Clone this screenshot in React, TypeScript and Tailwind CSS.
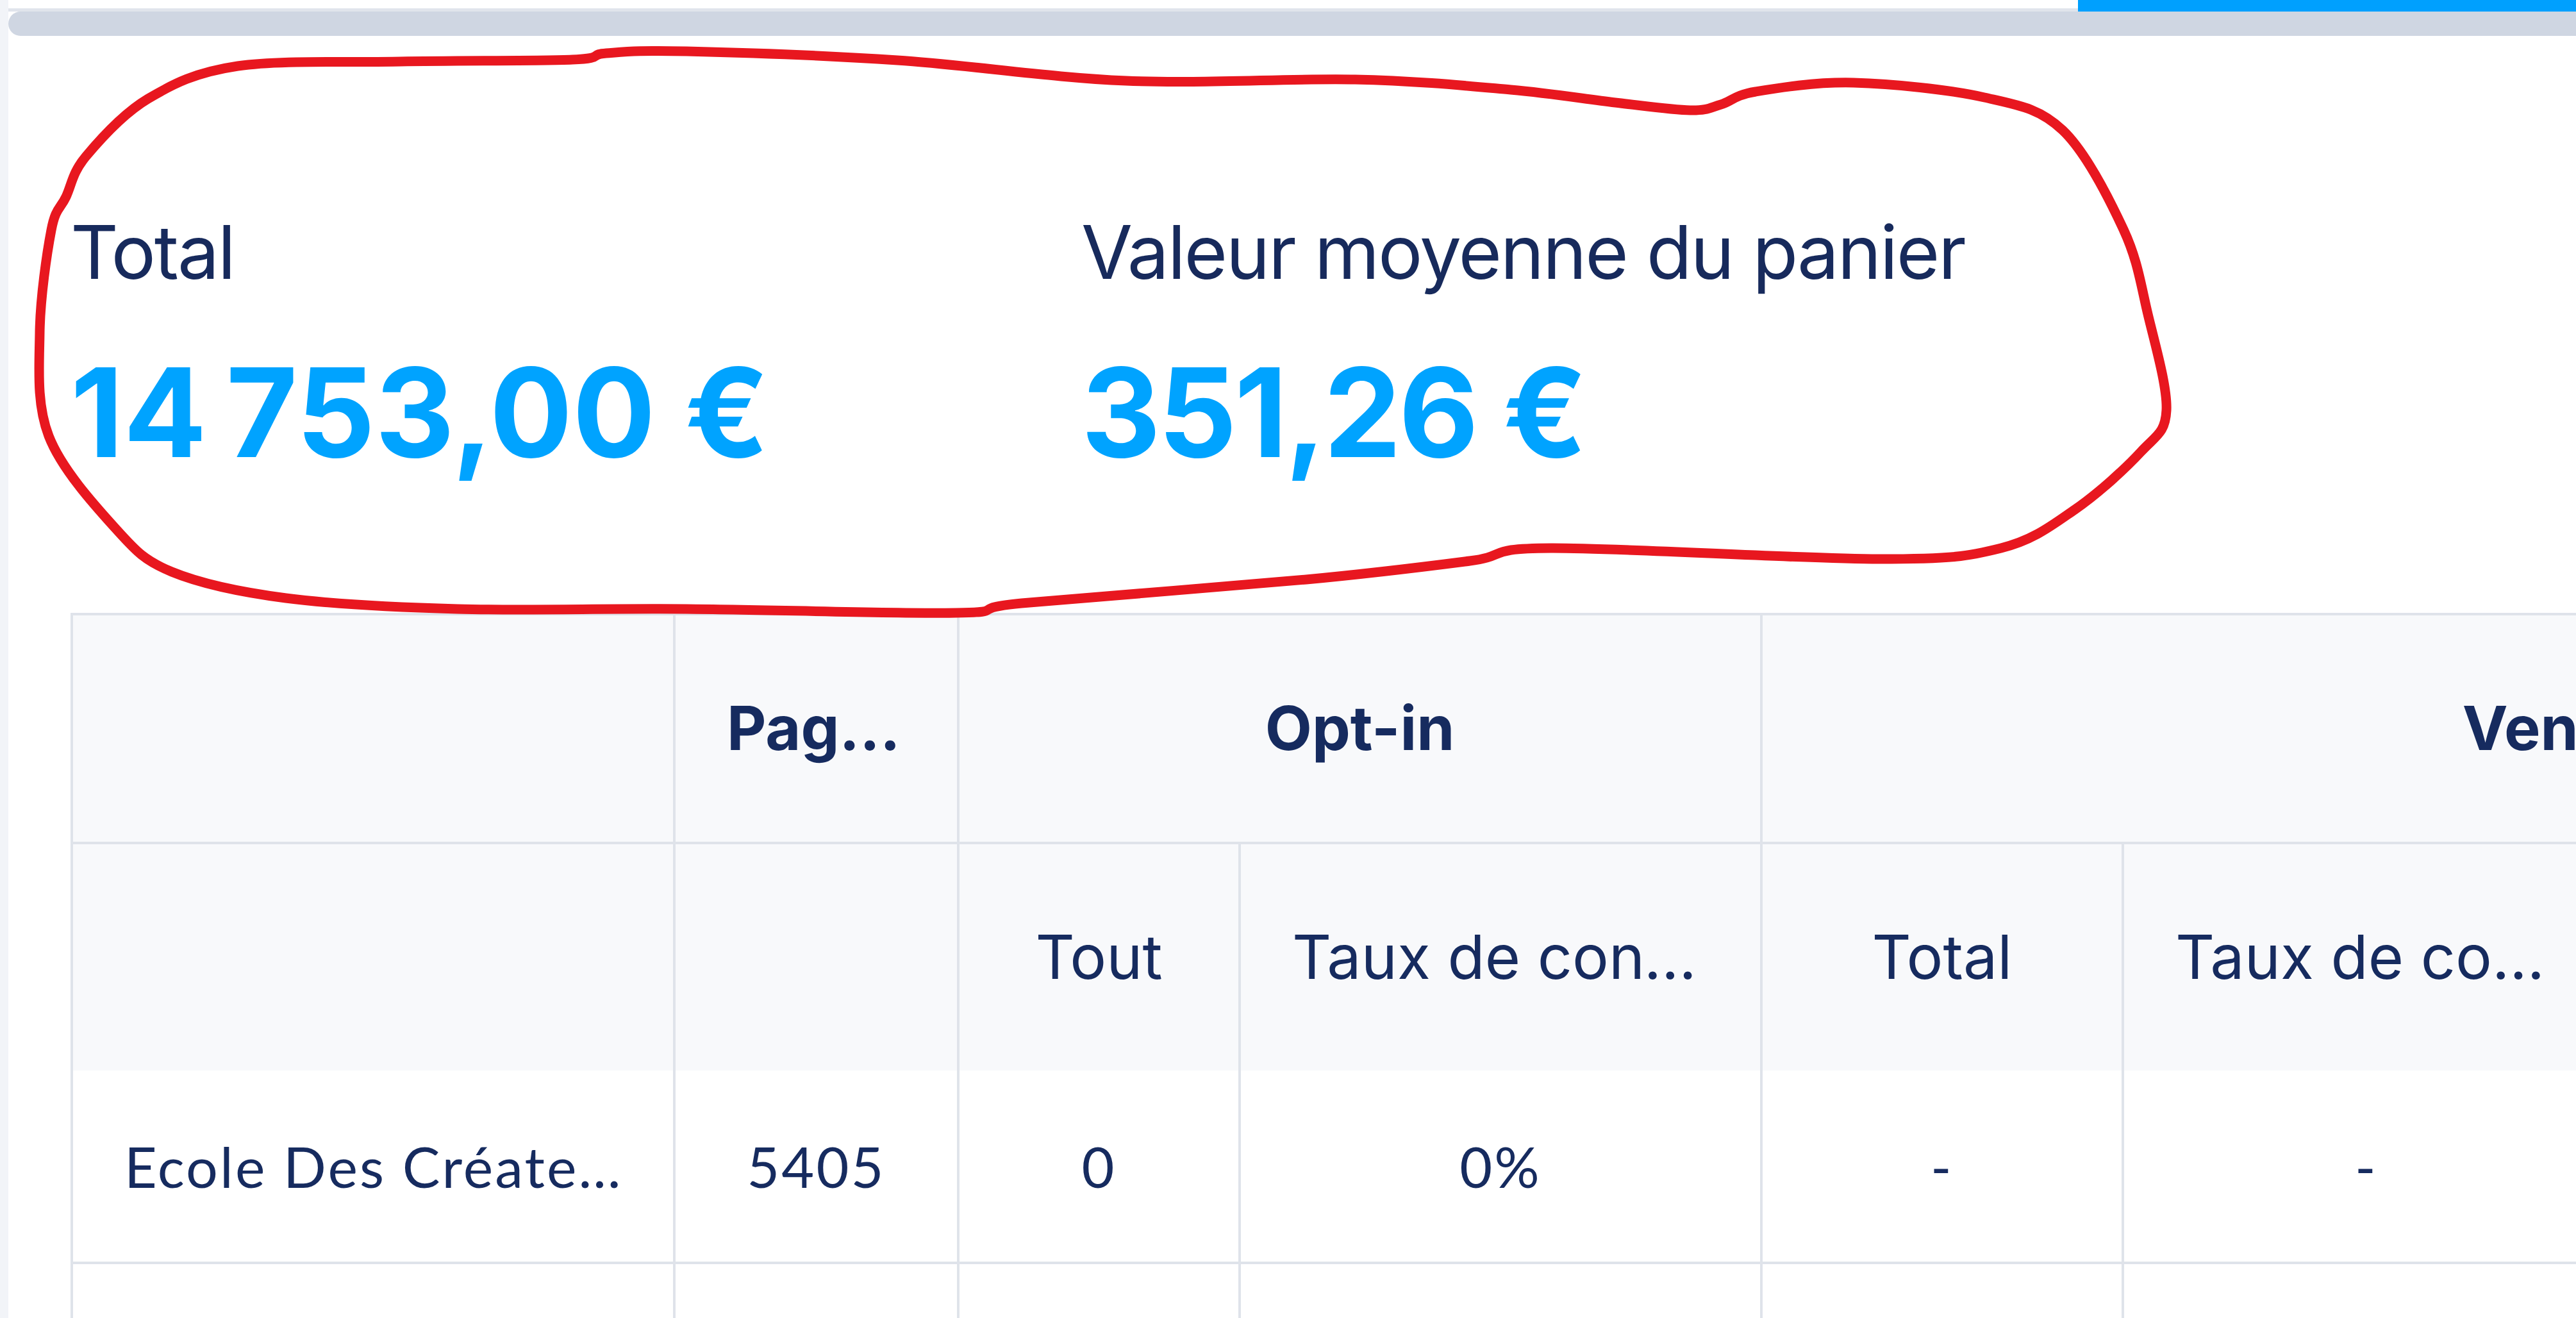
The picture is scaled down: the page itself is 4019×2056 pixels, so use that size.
import React from "react";

// hand-drawn red loop around the stats, points in page pixels
const loopPoints: [number, number][] = [
  [134, 244], [231, 154], [371, 103], [625, 96], [893, 93], [946, 83],
  [1071, 80], [1400, 94], [1757, 126], [2114, 124], [2357, 140], [2520, 160],
  [2637, 172], [2685, 163], [2739, 143], [2892, 129], [3096, 152], [3218, 203],
  [3313, 358], [3351, 490], [3380, 640], [3340, 705], [3237, 795], [3122, 855],
  [2931, 872], [2420, 855], [2293, 875], [2038, 904], [1594, 941], [1492, 956],
  [1071, 950], [714, 950], [446, 933], [268, 892], [179, 823], [76, 680],
  [62, 519], [80, 359], [103, 307],
];

function smoothClosedPath(pts: [number, number][]) {
  const n = pts.length;
  let d = `M ${pts[0][0]} ${pts[0][1]}`;
  for (let i = 0; i < n; i++) {
    const p0 = pts[(i - 1 + n) % n];
    const p1 = pts[i];
    const p2 = pts[(i + 1) % n];
    const p3 = pts[(i + 2) % n];
    const c1x = p1[0] + (p2[0] - p0[0]) / 6;
    const c1y = p1[1] + (p2[1] - p0[1]) / 6;
    const c2x = p2[0] - (p3[0] - p1[0]) / 6;
    const c2y = p2[1] - (p3[1] - p1[1]) / 6;
    d += ` C ${c1x.toFixed(1)} ${c1y.toFixed(1)} ${c2x.toFixed(1)} ${c2y.toFixed(1)} ${p2[0]} ${p2[1]}`;
  }
  return d;
}

function Stat({ label, value, className }: { label: string; value: string; className?: string }) {
  return (
    <div className={className}>
      <div className="text-[116px] leading-[140px] tracking-[-0.02em] text-[#172a5c]">{label}</div>
      <div className="mt-[64px] text-[192px] font-bold leading-[232px] tracking-[-0.02em] text-[#00a3ff]">
        {value}
      </div>
    </div>
  );
}

export default function App() {
  const head1 = "border-4 border-[#dfe3ea] bg-[#f8f9fb] px-[80px] font-bold overflow-hidden whitespace-nowrap text-ellipsis";
  const head2 = "border-x-4 border-t-4 border-[#dfe3ea] bg-[#f8f9fb] px-[80px] font-normal overflow-hidden whitespace-nowrap text-ellipsis";
  const cell = "border-x-4 border-b-4 border-[#dfe3ea] bg-white px-[80px] text-center font-['Lato',sans-serif] text-[88px] tracking-[0.035em] overflow-hidden whitespace-nowrap text-ellipsis";

  return (
    <div className="relative flex h-screen w-screen overflow-hidden bg-white font-[Inter,sans-serif] text-[#162b5f]">
      <div className="w-[13px] shrink-0 bg-[#f2f4f8]" />

      <div className="flex min-w-0 flex-1 flex-col">
        {/* scroll strip at the top */}
        <div className="flex h-[18px] shrink-0">
          <div className="flex flex-1 flex-col justify-end">
            <div className="h-[5px] bg-[#e0e4ec]" />
          </div>
          <div className="w-[777px] bg-[#00a0fe]" />
        </div>
        <div className="h-[38px] shrink-0 rounded-l-full bg-[#cfd6e2]" />

        <div className="shrink-0 pl-[97px] pt-[267px]">
          <div className="flex">
            <Stat className="w-[1577px] shrink-0" label="Total" value={"14\u202F753,00\u00A0€"} />
            <Stat label="Valeur moyenne du panier" value={"351,26\u00A0€"} />
          </div>

          <div className="mt-[197px]">
            <table className="w-[5148px] table-fixed border-collapse text-[95px]">
              <colgroup>
                <col className="w-[940px]" />
                <col className="w-[443px]" />
                <col className="w-[439px]" />
                <col className="w-[814px]" />
                <col className="w-[564px]" />
                <col className="w-[760px]" />
                <col className="w-[560px]" />
                <col className="w-[628px]" />
              </colgroup>
              <thead>
                <tr className="h-[357px]">
                  <th className={head1}></th>
                  <th className={head1}>Pages vues</th>
                  <th className={head1} colSpan={2}>Opt-in</th>
                  <th className={head1} colSpan={4}>Ventes</th>
                </tr>
                <tr className="h-[355px]">
                  <th className={head2}></th>
                  <th className={head2}></th>
                  <th className={head2}>Tout</th>
                  <th className={head2}>Taux de conversion</th>
                  <th className={head2}>Total</th>
                  <th className={head2}>Taux de conversion</th>
                  <th className={head2}>Panier moyen</th>
                  <th className={head2}>Remboursements</th>
                </tr>
              </thead>
              <tbody>
                <tr className="h-[300px]">
                  <td className={cell + " text-left"}>Ecole Des Créateurs</td>
                  <td className={cell}>5405</td>
                  <td className={cell}>0</td>
                  <td className={cell}>0%</td>
                  <td className={cell}>-</td>
                  <td className={cell}>-</td>
                  <td className={cell}>-</td>
                  <td className={cell}>-</td>
                </tr>
                <tr className="h-[300px]">
                  <td className={cell + " text-left"}>Formation Pro</td>
                  <td className={cell}>1280</td>
                  <td className={cell}>0</td>
                  <td className={cell}>0%</td>
                  <td className={cell}>-</td>
                  <td className={cell}>-</td>
                  <td className={cell}>-</td>
                  <td className={cell}>-</td>
                </tr>
              </tbody>
            </table>
          </div>
        </div>
      </div>

      <svg
        className="pointer-events-none absolute inset-0 h-full w-full"
        viewBox="0 0 4019 2056"
        preserveAspectRatio="none"
      >
        <path
          d={smoothClosedPath(loopPoints)}
          fill="none"
          stroke="#e8171f"
          strokeWidth={15}
          strokeLinecap="round"
          strokeLinejoin="round"
        />
      </svg>
    </div>
  );
}
